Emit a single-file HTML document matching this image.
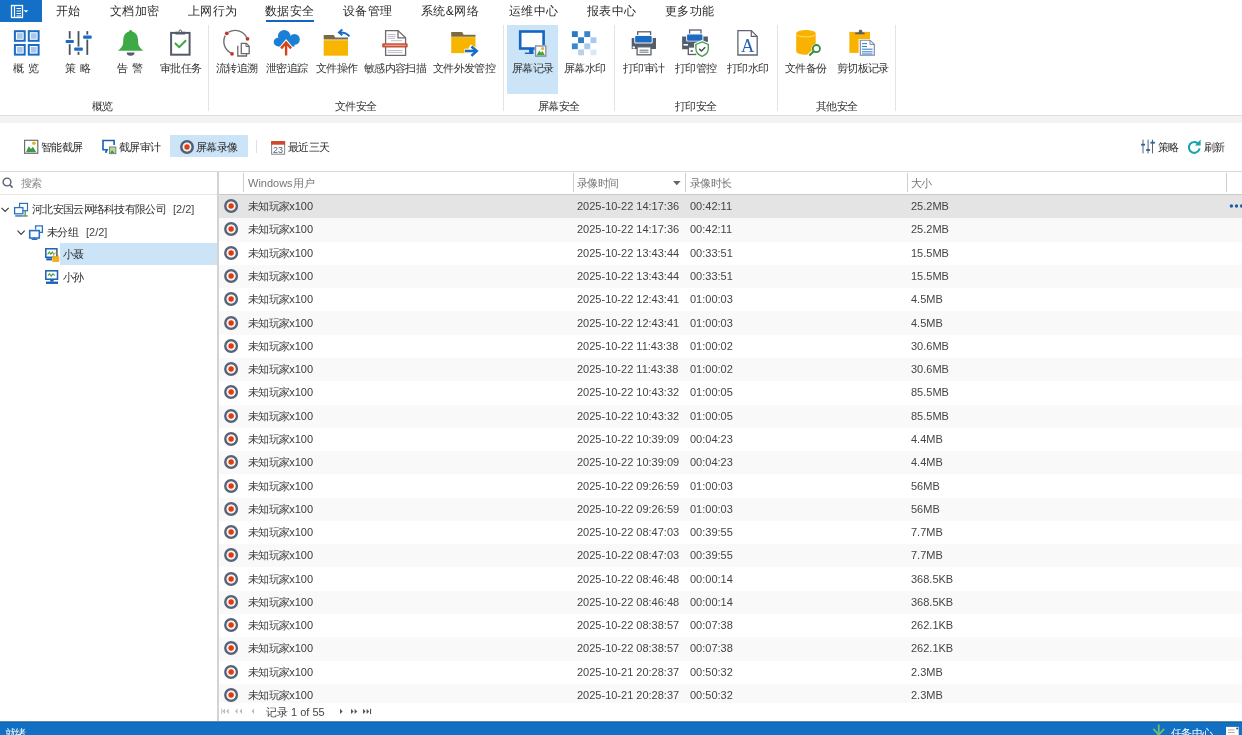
<!DOCTYPE html><html><head><meta charset="utf-8"><style>
*{margin:0;padding:0;box-sizing:border-box}
html,body{width:1242px;height:735px;overflow:hidden;background:#fff}
body{position:relative;font-family:"Liberation Sans",sans-serif;color:#444}
.t{position:absolute;white-space:nowrap;line-height:14px}
#w{position:absolute;left:0;top:0;width:1242px;height:735px;will-change:transform}
.i{position:absolute;overflow:visible}
.r{position:absolute}
</style></head><body><div id="w"><div class="r" style="left:0px;top:0px;width:42px;height:22px;background:#1370c6;"></div>
<svg class="i" style="left:10px;top:4px;" width="22" height="15" viewBox="0 0 22 15"><rect x="1.5" y="1.5" width="11" height="12" fill="none" stroke="#fff" stroke-width="1.3"/><line x1="4.5" y1="2" x2="4.5" y2="13" stroke="#fff" stroke-width="1.2"/><line x1="6.5" y1="4.5" x2="11" y2="4.5" stroke="#fff" stroke-width="1"/><line x1="6.5" y1="7" x2="11" y2="7" stroke="#fff" stroke-width="1"/><line x1="6.5" y1="9.5" x2="11" y2="9.5" stroke="#fff" stroke-width="1"/><line x1="6.5" y1="12" x2="11" y2="12" stroke="#fff" stroke-width="1"/><path d="M13.6 6.2 L18.4 6.2 L16 8.4 Z" fill="#fff"/></svg>
<div class="t" style="left:56px;top:4px;font-size:12px;color:#2a2a2a;letter-spacing:0.4px;">开始</div>
<div class="t" style="left:110px;top:4px;font-size:12px;color:#2a2a2a;letter-spacing:0.4px;">文档加密</div>
<div class="t" style="left:188px;top:4px;font-size:12px;color:#2a2a2a;letter-spacing:0.4px;">上网行为</div>
<div class="t" style="left:265px;top:4px;font-size:12px;color:#2a2a2a;letter-spacing:0.4px;">数据安全</div>
<div class="t" style="left:343px;top:4px;font-size:12px;color:#2a2a2a;letter-spacing:0.4px;">设备管理</div>
<div class="t" style="left:421px;top:4px;font-size:12px;color:#2a2a2a;letter-spacing:0.4px;">系统&amp;网络</div>
<div class="t" style="left:509px;top:4px;font-size:12px;color:#2a2a2a;letter-spacing:0.4px;">运维中心</div>
<div class="t" style="left:587px;top:4px;font-size:12px;color:#2a2a2a;letter-spacing:0.4px;">报表中心</div>
<div class="t" style="left:665px;top:4px;font-size:12px;color:#2a2a2a;letter-spacing:0.4px;">更多功能</div>
<div class="r" style="left:266px;top:20px;width:48px;height:2px;background:#1565c0;"></div>
<div class="r" style="left:170px;top:135px;width:78px;height:22px;background:#cce4f7;"></div>
<div class="r" style="left:60px;top:243px;width:157px;height:22px;background:#cce4f7;"></div>
<div class="r" style="left:507px;top:25px;width:51px;height:69px;background:#cce4f7;"></div>
<div class="r" style="left:208px;top:25px;width:1px;height:86px;background:#e4e4e4;"></div>
<div class="r" style="left:503px;top:25px;width:1px;height:86px;background:#e4e4e4;"></div>
<div class="r" style="left:614px;top:25px;width:1px;height:86px;background:#e4e4e4;"></div>
<div class="r" style="left:777px;top:25px;width:1px;height:86px;background:#e4e4e4;"></div>
<div class="r" style="left:895px;top:25px;width:1px;height:86px;background:#e4e4e4;"></div>
<div class="r" style="left:0px;top:115px;width:1242px;height:1px;background:#dedede;"></div>
<div class="r" style="left:0px;top:116px;width:1242px;height:7px;background:#f3f3f3;"></div>
<svg class="i" style="left:13px;top:29px;" width="28" height="28" viewBox="0 0 28 28"><rect x="1.9" y="2.2" width="9.8" height="9.6" fill="#fff" stroke="#1a6cc4" stroke-width="2"/><rect x="3.9" y="4.2" width="5.8" height="5.6" fill="#a6c6ee"/><rect x="15.8" y="2.2" width="9.8" height="9.6" fill="#fff" stroke="#1a6cc4" stroke-width="2"/><rect x="17.8" y="4.2" width="5.8" height="5.6" fill="#a6c6ee"/><rect x="1.9" y="16" width="9.8" height="9.6" fill="#fff" stroke="#1a6cc4" stroke-width="2"/><rect x="3.9" y="18" width="5.8" height="5.6" fill="#a6c6ee"/><rect x="15.8" y="16" width="9.8" height="9.6" fill="#fff" stroke="#1a6cc4" stroke-width="2"/><rect x="17.8" y="18" width="5.8" height="5.6" fill="#a6c6ee"/></svg>
<svg class="i" style="left:64px;top:30px;" width="30" height="27" viewBox="0 0 30 27"><line x1="5.7" y1="1.1" x2="5.7" y2="8.6" stroke="#4a505c" stroke-width="1.8"/><line x1="5.7" y1="14.2" x2="5.7" y2="24.9" stroke="#4a505c" stroke-width="1.8"/><line x1="14.5" y1="1.1" x2="14.5" y2="16.6" stroke="#4a505c" stroke-width="1.8"/><line x1="14.5" y1="21.8" x2="14.5" y2="24.9" stroke="#4a505c" stroke-width="1.8"/><line x1="23.3" y1="1.1" x2="23.3" y2="4.6" stroke="#4a505c" stroke-width="1.8"/><line x1="23.3" y1="9.6" x2="23.3" y2="24.9" stroke="#4a505c" stroke-width="1.8"/><rect x="1.6" y="9.9" width="8.3" height="3" rx="1" fill="#1a6cc4"/><rect x="10.1" y="17.5" width="8.8" height="3.3" rx="1" fill="#1a6cc4"/><rect x="19.1" y="5.5" width="8.6" height="3.2" rx="1" fill="#1a6cc4"/></svg>
<svg class="i" style="left:116px;top:29px;" width="30" height="28" viewBox="0 0 30 28"><circle cx="14.65" cy="2.6" r="1.7" fill="#3daa45"/><path d="M14.65 2.4 C10.2 2.4 7.6 5.4 7.3 10.5 L7 15 C6.7 17.6 4.3 19.6 2 21.7 L27.3 21.7 C25 19.6 22.6 17.6 22.3 15 L22 10.5 C21.7 5.4 19.1 2.4 14.65 2.4 Z" fill="#3daa45"/><path d="M10.7 23.6 A3.9 3.2 0 0 0 18.5 23.6 Z" fill="#555d6a"/></svg>
<svg class="i" style="left:168px;top:28px;" width="26" height="30" viewBox="0 0 26 30"><rect x="3.1" y="4.9" width="18.5" height="21.8" fill="#fff" stroke="#535b6b" stroke-width="2"/><path d="M7.4 6.6 L7.4 3.8 L10.6 3.8 C10.8 2.3 11.4 1.6 12.3 1.6 C13.2 1.6 13.8 2.3 14 3.8 L17.2 3.8 L17.2 6.6 Z" fill="#535b6b"/><circle cx="12.3" cy="3.4" r="0.8" fill="#fff"/><path d="M6.9 15.1 L11.2 19.1 L18.1 12.2" fill="none" stroke="#3da544" stroke-width="2"/></svg>
<svg class="i" style="left:220px;top:27px;" width="32" height="32" viewBox="0 0 32 32"><path d="M8.6 5.2 A12.9 12.9 0 0 1 26.6 10.3" fill="none" stroke="#707070" stroke-width="1.4"/><path d="M5.3 8.5 A12.9 12.9 0 0 0 10.6 25.8" fill="none" stroke="#707070" stroke-width="1.4"/><circle cx="6.8" cy="6.3" r="1.9" fill="#c0352b"/><circle cx="27.5" cy="11.8" r="1.9" fill="#c0352b"/><circle cx="12" cy="26.8" r="1.9" fill="#c0352b"/><path d="M17.8 18.7 L17.8 29 L26.5 29 L26.5 26.8" fill="none" stroke="#6a6a6a" stroke-width="1.3"/><path d="M21.3 16.3 L26.3 16.3 L29.2 19.2 L29.2 26.6 L21.3 26.6 Z" fill="#fff" stroke="#6a6a6a" stroke-width="1.3"/><path d="M26 16.5 L26 19.5 L29 19.5" fill="none" stroke="#6a6a6a" stroke-width="1"/></svg>
<svg class="i" style="left:272px;top:28px;" width="30" height="30" viewBox="0 0 30 30"><g fill="#1b7fd6"><circle cx="12.2" cy="8.2" r="6.2"/><circle cx="22.4" cy="11.4" r="5.4"/><circle cx="6" cy="14" r="4.3"/><rect x="6" y="10" width="16.5" height="8.5"/><circle cx="10" cy="15" r="3.7"/><circle cx="19" cy="15" r="3.7"/></g><path d="M8.1 21.7 L14.1 14.6 L20.1 21.7" fill="none" stroke="#fff" stroke-width="4.5"/><path d="M9.1 20.4 L14.1 14.6 L19.1 20.4" fill="none" stroke="#d64318" stroke-width="2.4"/><line x1="14.1" y1="15.5" x2="14.1" y2="27.5" stroke="#d64318" stroke-width="2.4"/></svg>
<svg class="i" style="left:322px;top:27px;" width="30" height="30" viewBox="0 0 30 30"><path d="M1.7 8 L11.7 8 L13.2 10.6 L26 10.6 L26 12.6 L1.7 12.6 Z" fill="#7a6b3c"/><rect x="1.7" y="13.2" width="24.3" height="15.5" fill="#f8b500"/><path d="M27.4 9.3 Q24.5 5.4 18 5.4" fill="none" stroke="#1a6cc4" stroke-width="2"/><path d="M20.3 2.5 L17 5.4 L20.3 8.2" fill="none" stroke="#1a6cc4" stroke-width="2"/></svg>
<svg class="i" style="left:380px;top:27px;" width="32" height="32" viewBox="0 0 32 32"><path d="M5.6 3.6 L18 3.6 L25.6 10.8 L25.6 28.3 L5.6 28.3 Z" fill="#fff" stroke="#6b6b6b" stroke-width="1.3"/><path d="M18 3.6 L18 10.8 L25.6 10.8" fill="none" stroke="#6b6b6b" stroke-width="1.3"/><g stroke="#b8b4cc" stroke-width="0.9"><line x1="7.6" y1="7.5" x2="15.5" y2="7.5"/><line x1="7.6" y1="9.4" x2="15.5" y2="9.4"/><line x1="7.6" y1="11.3" x2="15" y2="11.3"/><line x1="11" y1="13.7" x2="22" y2="13.7"/><line x1="7.5" y1="23.5" x2="22.5" y2="23.5"/><line x1="7.5" y1="25.4" x2="22.5" y2="25.4"/></g><rect x="2.2" y="16.3" width="25.5" height="4.1" rx="1.2" fill="#c9533a"/><rect x="4.5" y="17.8" width="21" height="1.1" fill="#eba58f"/></svg>
<svg class="i" style="left:450px;top:29px;" width="30" height="30" viewBox="0 0 30 30"><path d="M1.2 2.9 L12.1 2.9 L13.6 5.8 L25.5 5.8 L25.5 7.7 L1.2 7.7 Z" fill="#7a6b3c"/><rect x="1.2" y="8.1" width="24.3" height="16" fill="#f8b500"/><path d="M14.5 22 L22 22 M19.6 17.4 L27.9 22 L19.6 26.9" fill="none" stroke="#fff" stroke-width="4.6"/><line x1="15" y1="22" x2="26" y2="22" stroke="#1a6cc4" stroke-width="2.6"/><path d="M21.4 17.4 L26.7 22 L21.4 26.9" fill="none" stroke="#1a6cc4" stroke-width="2.6"/></svg>
<svg class="i" style="left:516px;top:28px;" width="32" height="32" viewBox="0 0 32 32"><rect x="4.2" y="3.5" width="23.4" height="17" fill="#fff" stroke="#1565c5" stroke-width="2.6"/><rect x="13.1" y="21" width="4.3" height="4.6" fill="#1565c5"/><rect x="8.9" y="24.6" width="8.5" height="1.4" fill="#1565c5"/><rect x="18.6" y="17" width="12.2" height="12.2" fill="#cce4f7"/><rect x="19.6" y="18" width="10.2" height="10.2" fill="#fff" stroke="#8a9098" stroke-width="1.3"/><path d="M20.5 27.5 L23.3 22.5 L25 24.8 L26.5 23 L29 27.5 Z" fill="#45a045"/><circle cx="26.7" cy="20.6" r="1.5" fill="#e8b020"/></svg>
<svg class="i" style="left:570px;top:29px;" width="28" height="28" viewBox="0 0 28 28"><rect x="1.9" y="2.2" width="5.9" height="5.8" fill="#2a78c6"/><rect x="14.3" y="2.2" width="5.9" height="5.8" fill="#3a84cc"/><rect x="8.1" y="8.3" width="5.9" height="5.8" fill="#2f7ec8"/><rect x="20.5" y="8.3" width="5.9" height="5.8" fill="#a9c9ea"/><rect x="1.9" y="14.399999999999999" width="5.9" height="5.8" fill="#3a86d0"/><rect x="14.3" y="14.399999999999999" width="5.9" height="5.8" fill="#a9c9ea"/><rect x="8.1" y="20.5" width="5.9" height="5.8" fill="#b9d1ea"/><rect x="20.5" y="20.5" width="5.9" height="5.8" fill="#dde8f4"/></svg>
<svg class="i" style="left:630px;top:29px;" width="30" height="28" viewBox="0 0 30 28"><rect x="7.7" y="2.8" width="12.9" height="6" fill="#fff" stroke="#5a606c" stroke-width="1.3"/><path d="M1.7 9 L26 9 L26 20 L1.7 20 Z" fill="#565d6a"/><circle cx="3.8" cy="18.4" r="1.2" fill="#fff"/><rect x="4.2" y="6.1" width="18.5" height="8.4" rx="1.5" fill="#eef6fc"/><rect x="5.2" y="7" width="16.5" height="6.6" rx="1" fill="#1a6cc4"/><rect x="7.1" y="17.8" width="13.9" height="8" fill="#fff" stroke="#5a606c" stroke-width="1.3"/><line x1="9.5" y1="21.2" x2="18.5" y2="21.2" stroke="#5a606c" stroke-width="0.9"/><line x1="9.5" y1="23.2" x2="18.5" y2="23.2" stroke="#5a606c" stroke-width="0.9"/></svg>
<svg class="i" style="left:680px;top:27px;" width="32" height="32" viewBox="0 0 32 32"><rect x="9.6" y="3" width="11.4" height="5" fill="#fff" stroke="#5a606c" stroke-width="1.3"/><path d="M2.1 9.4 L27.9 9.4 L27.9 15 L17 15 L17 22.3 L2.1 22.3 Z" fill="#565d6a"/><rect x="3.5" y="17" width="4.5" height="1.6" fill="#fff"/><rect x="6.1" y="6.6" width="17.3" height="8" rx="1.5" fill="#eef6fc"/><rect x="7.1" y="7.5" width="15.3" height="6.2" rx="1" fill="#1a6cc4"/><rect x="8.3" y="20" width="7.7" height="7.5" fill="#fff" stroke="#5a606c" stroke-width="1.3"/><rect x="10.5" y="23.2" width="2.4" height="1.6" fill="#5a606c"/><path d="M22.1 14.2 L29 17 L29 21.8 C29 26 26 28.6 22.1 30 C18.2 28.6 15.2 26 15.2 21.8 L15.2 17 Z" fill="#fff" stroke="#fff" stroke-width="2.2"/><path d="M22.1 14.9 L28.3 17.4 L28.3 21.8 C28.3 25.6 25.6 28 22.1 29.3 C18.6 28 15.9 25.6 15.9 21.8 L15.9 17.4 Z" fill="#fff" stroke="#4aa04e" stroke-width="1.4"/><path d="M19.2 21.9 L21.5 24 L25.2 20.2" fill="none" stroke="#4a4f5a" stroke-width="1.5"/></svg>
<svg class="i" style="left:735px;top:28px;" width="26" height="30" viewBox="0 0 26 30"><path d="M2.9 2.6 L16.3 2.6 L22.2 8.4 L22.2 27 L2.9 27 Z" fill="#fff" stroke="#5f6470" stroke-width="1.3"/><path d="M16.3 2.6 L16.3 8.4 L22.2 8.4" fill="none" stroke="#5f6470" stroke-width="1.2"/><text x="12.6" y="23.5" font-family="Liberation Serif" font-size="18.5" fill="#2a62b0" text-anchor="middle">A</text></svg>
<svg class="i" style="left:794px;top:28px;" width="30" height="30" viewBox="0 0 30 30"><path d="M2.2 5.6 L2.2 23.6 A9.75 3.2 0 0 0 21.7 23.6 L21.7 5.6 Z" fill="#f9b200"/><ellipse cx="11.95" cy="5.3" rx="9.75" ry="3.2" fill="#f9b200"/><path d="M2.4 6.5 A9.75 3.0 0 0 0 21.5 6.5" fill="none" stroke="#fde58a" stroke-width="0.9"/><circle cx="22.4" cy="20.6" r="4.9" fill="#fff"/><line x1="19.2" y1="23.6" x2="14.6" y2="27.8" stroke="#fff" stroke-width="3.6"/><circle cx="22.4" cy="20.6" r="3.6" fill="#fff" stroke="#3d8b3d" stroke-width="1.8"/><line x1="19.8" y1="23.2" x2="15.3" y2="27.4" stroke="#3d8b3d" stroke-width="2"/></svg>
<svg class="i" style="left:848px;top:28px;" width="30" height="30" viewBox="0 0 30 30"><rect x="1.4" y="3.9" width="20.6" height="21" fill="#f9b200"/><path d="M7 6.3 L7.4 4.6 L10.5 4.6 L11.4 1.7 L13.7 1.7 L14.6 4.6 L16.4 4.6 L16.8 6.3 Z" fill="#5a606c"/><path d="M11.6 12 L22.2 12 L26.8 16.2 L26.8 27.8 L11.6 27.8 Z" fill="#fff" stroke="#fff" stroke-width="2"/><path d="M12.3 12.2 L22 12.2 L26.3 16.4 L26.3 27.3 L12.3 27.3 Z" fill="#fff" stroke="#7a85a0" stroke-width="1.1"/><path d="M22 12.2 L22 16.4 L26.3 16.4" fill="none" stroke="#7a85a0" stroke-width="1"/><g stroke="#3a86d0" stroke-width="1.1"><line x1="14" y1="15.6" x2="19" y2="15.6"/><line x1="14" y1="18.5" x2="19" y2="18.5"/><line x1="14" y1="21.2" x2="24.6" y2="21.2"/><line x1="14" y1="23.8" x2="24.6" y2="23.8"/><line x1="14" y1="26" x2="24.6" y2="26"/></g></svg>
<svg class="i" style="left:23px;top:138px;" width="17" height="18" viewBox="0 0 17 18"><rect x="1.6" y="2.3" width="13.2" height="13" fill="#fff" stroke="#6f6f6f" stroke-width="1.2"/><path d="M3 14.2 L5.7 8.2 L8 11 L9.9 8.8 L13.3 14.2 Z" fill="#3e9a48"/><circle cx="10.9" cy="5.2" r="1.8" fill="#e2b51c"/></svg>
<svg class="i" style="left:101px;top:138px;" width="17" height="18" viewBox="0 0 17 18"><path d="M7 11.8 L2 11.8 L2 2.5 L13.1 2.5 L13.1 7" fill="none" stroke="#1a5fb8" stroke-width="1.6"/><path d="M5.4 11.8 L5.4 14 L4 14" fill="none" stroke="#1a5fb8" stroke-width="1.5"/><rect x="8.5" y="9" width="6.3" height="6.6" fill="#b5dba0" stroke="#7f8a80" stroke-width="1.1"/><path d="M9.3 15 L11 12 L13.5 15 Z" fill="#3e9a48"/></svg>
<svg class="i" style="left:179.5px;top:139.5px;" width="14" height="14" viewBox="0 0 14 14"><circle cx="7" cy="7" r="5.7" fill="none" stroke="#526075" stroke-width="2.5"/><circle cx="7" cy="7" r="4.2" fill="#fff2ec"/><circle cx="7" cy="7" r="2.7" fill="#dc3f12"/></svg>
<svg class="i" style="left:270px;top:140px;" width="16" height="16" viewBox="0 0 16 16"><rect x="1.6" y="1.6" width="13" height="12.6" fill="#fff" stroke="#8c9094" stroke-width="1.1"/><rect x="1.1" y="1.1" width="14" height="3.6" fill="#d2482a"/><text x="8.1" y="13.4" font-family="Liberation Sans" font-size="9" fill="#505a70" text-anchor="middle">23</text></svg>
<svg class="i" style="left:1140px;top:139px;" width="16" height="16" viewBox="0 0 16 16"><g stroke="#5b6270" stroke-width="1"><line x1="3" y1="0.6" x2="3" y2="14.4"/><line x1="8.1" y1="0.6" x2="8.1" y2="14.4"/><line x1="12.5" y1="0.6" x2="12.5" y2="14.4"/></g><rect x="1.1" y="4.8" width="3.9" height="1.8" fill="#2a62a8"/><rect x="6.1" y="10.1" width="4" height="1.8" fill="#2a62a8"/><rect x="10.4" y="2.8" width="4.5" height="1.8" fill="#2a62a8"/></svg>
<svg class="i" style="left:1186px;top:139px;" width="16" height="16" viewBox="0 0 16 16"><path d="M12.4 4.9 A5.4 5.4 0 1 0 13.6 9.4" fill="none" stroke="#16a3b0" stroke-width="2.1"/><path d="M9 6.6 L14.6 6.6 L14.6 0.6 Z" fill="#16a3b0"/></svg>
<svg class="i" style="left:1px;top:176px;" width="14" height="14" viewBox="0 0 14 14"><circle cx="6" cy="6" r="3.9" fill="none" stroke="#5a6070" stroke-width="1.4"/><line x1="8.8" y1="8.8" x2="11.6" y2="11.6" stroke="#5a6070" stroke-width="1.6"/></svg>
<svg class="i" style="left:0px;top:206px;" width="12" height="8" viewBox="0 0 12 8"><path d="M1.5 1.8 L5.1 5.5 L8.7 1.8" fill="none" stroke="#404040" stroke-width="1.2"/></svg>
<svg class="i" style="left:15.5px;top:229px;" width="12" height="8" viewBox="0 0 12 8"><path d="M1.5 1.6 L5.1 5.3 L8.7 1.6" fill="none" stroke="#404040" stroke-width="1.2"/></svg>
<svg class="i" style="left:13px;top:201px;" width="17" height="17" viewBox="0 0 17 17"><rect x="6.6" y="2.4" width="7.9" height="7.3" fill="#fff" stroke="#2a72c0" stroke-width="1.2"/><rect x="1.6" y="6.6" width="8.3" height="6.2" fill="#fff" stroke="#2a72c0" stroke-width="1.3"/><rect x="2.2" y="14.3" width="7.6" height="1.3" fill="#2a62b8"/><rect x="9.9" y="14.3" width="4.8" height="1.3" fill="#4a8a40"/><rect x="11.6" y="9.7" width="1.2" height="4.8" fill="#4a8a40"/></svg>
<svg class="i" style="left:28px;top:224px;" width="17" height="17" viewBox="0 0 17 17"><path d="M7.6 5.5 L7.6 1.9 L14.4 1.9 L14.4 8.4 L12 8.4" fill="none" stroke="#2a72c0" stroke-width="1.3"/><rect x="1.7" y="6.6" width="9.6" height="7.4" fill="#fff" stroke="#2a72c0" stroke-width="1.6"/><rect x="5.5" y="14" width="2" height="1.3" fill="#2a72c0"/><rect x="3.6" y="14.8" width="5.8" height="1.2" fill="#2a72c0"/></svg>
<svg class="i" style="left:44px;top:246px;" width="17" height="17" viewBox="0 0 17 17"><rect x="1.8" y="2.8" width="11.1" height="8.5" fill="#fff" stroke="#1a5fb4" stroke-width="1.5"/><path d="M3.6 8.5 L5.3 6 L6.8 8.3 L8.3 6 L9.8 8.5" fill="none" stroke="#4a9a40" stroke-width="1.1"/><rect x="2.3" y="12.3" width="5.7" height="2.1" fill="#1a5fb4"/><rect x="8.3" y="10.3" width="6.9" height="5.7" rx="0.8" fill="#f2b21a"/><path d="M9.8 10.5 L9.8 8.9 A2 2 0 0 1 13.8 8.9 L13.8 10.5" fill="none" stroke="#c89010" stroke-width="0.9"/></svg>
<svg class="i" style="left:44px;top:268px;" width="17" height="17" viewBox="0 0 17 17"><rect x="1.8" y="2.8" width="11.7" height="8.4" fill="#fff" stroke="#1a5fb4" stroke-width="1.5"/><path d="M4 7.6 L5.6 5.6 L7.2 8.2 L8.8 5.9 L10.8 7.4" fill="none" stroke="#4a9a40" stroke-width="1.1"/><rect x="2" y="13.6" width="12" height="2.3" fill="#1a5fb4"/><rect x="6.2" y="11.8" width="3.4" height="1.8" fill="#1a5fb4"/></svg>
<div class="t" style="left:13px;top:60.5px;font-size:11px;color:#333;letter-spacing:-0.7px;">概&nbsp;&nbsp;览</div>
<div class="t" style="left:65px;top:60.5px;font-size:11px;color:#333;letter-spacing:-0.7px;">策&nbsp;&nbsp;略</div>
<div class="t" style="left:117px;top:60.5px;font-size:11px;color:#333;letter-spacing:-0.7px;">告&nbsp;&nbsp;警</div>
<div class="t" style="left:160px;top:60.5px;font-size:11px;color:#333;letter-spacing:-0.7px;">审批任务</div>
<div class="t" style="left:216px;top:60.5px;font-size:11px;color:#333;letter-spacing:-0.7px;">流转追溯</div>
<div class="t" style="left:266px;top:60.5px;font-size:11px;color:#333;letter-spacing:-0.7px;">泄密追踪</div>
<div class="t" style="left:316px;top:60.5px;font-size:11px;color:#333;letter-spacing:-0.7px;">文件操作</div>
<div class="t" style="left:364px;top:60.5px;font-size:11px;color:#333;letter-spacing:-0.7px;">敏感内容扫描</div>
<div class="t" style="left:433px;top:60.5px;font-size:11px;color:#333;letter-spacing:-0.7px;">文件外发管控</div>
<div class="t" style="left:512px;top:60.5px;font-size:11px;color:#333;letter-spacing:-0.7px;">屏幕记录</div>
<div class="t" style="left:564px;top:60.5px;font-size:11px;color:#333;letter-spacing:-0.7px;">屏幕水印</div>
<div class="t" style="left:623px;top:60.5px;font-size:11px;color:#333;letter-spacing:-0.7px;">打印审计</div>
<div class="t" style="left:675px;top:60.5px;font-size:11px;color:#333;letter-spacing:-0.7px;">打印管控</div>
<div class="t" style="left:727px;top:60.5px;font-size:11px;color:#333;letter-spacing:-0.7px;">打印水印</div>
<div class="t" style="left:785px;top:60.5px;font-size:11px;color:#333;letter-spacing:-0.7px;">文件备份</div>
<div class="t" style="left:837px;top:60.5px;font-size:11px;color:#333;letter-spacing:-0.7px;">剪切板记录</div>
<div class="t" style="left:92px;top:99px;font-size:11px;color:#333;letter-spacing:-0.7px;">概览</div>
<div class="t" style="left:335px;top:99px;font-size:11px;color:#333;letter-spacing:-0.7px;">文件安全</div>
<div class="t" style="left:538px;top:99px;font-size:11px;color:#333;letter-spacing:-0.7px;">屏幕安全</div>
<div class="t" style="left:675px;top:99px;font-size:11px;color:#333;letter-spacing:-0.7px;">打印安全</div>
<div class="t" style="left:816px;top:99px;font-size:11px;color:#333;letter-spacing:-0.7px;">其他安全</div>
<div class="r" style="left:256px;top:140px;width:1px;height:13px;background:#e0e0e0;"></div>
<div class="t" style="left:41px;top:139.5px;font-size:11px;color:#2a2a2a;letter-spacing:-0.7px;">智能截屏</div>
<div class="t" style="left:119px;top:139.5px;font-size:11px;color:#2a2a2a;letter-spacing:-0.7px;">截屏审计</div>
<div class="t" style="left:196px;top:139.5px;font-size:11px;color:#2a2a2a;letter-spacing:-0.7px;">屏幕录像</div>
<div class="t" style="left:288px;top:139.5px;font-size:11px;color:#2a2a2a;letter-spacing:-0.7px;">最近三天</div>
<div class="t" style="left:1158px;top:139.5px;font-size:11px;color:#2a2a2a;letter-spacing:-0.7px;">策略</div>
<div class="t" style="left:1204px;top:139.5px;font-size:11px;color:#2a2a2a;letter-spacing:-0.7px;">刷新</div>
<div class="r" style="left:0px;top:171px;width:1242px;height:1px;background:#d9d9d9;"></div>
<div class="r" style="left:217px;top:172px;width:2px;height:549px;background:#d3d3d3;"></div>
<div class="r" style="left:0px;top:194px;width:217px;height:1px;background:#e6e6e6;"></div>
<div class="t" style="left:21px;top:175.5px;font-size:11px;color:#8a8a8a;letter-spacing:-0.7px;">搜索</div>
<div class="t" style="left:32px;top:202.2px;font-size:11px;color:#2e2e2e;letter-spacing:-0.7px;">河北安国云网络科技有限公司</div>
<div class="t" style="left:47px;top:225.2px;font-size:11px;color:#2e2e2e;letter-spacing:-0.7px;">未分组</div>
<div class="t" style="left:63px;top:247.3px;font-size:11px;color:#2e2e2e;letter-spacing:-0.7px;">小聂</div>
<div class="t" style="left:63px;top:269.8px;font-size:11px;color:#2e2e2e;letter-spacing:-0.7px;">小孙</div>
<div class="t" style="left:173px;top:201.7px;font-size:11px;color:#444;">[2/2]</div>
<div class="t" style="left:86px;top:224.7px;font-size:11px;color:#444;">[2/2]</div>
<div class="r" style="left:219px;top:194px;width:1023px;height:1px;background:#c9c9c9;"></div>
<div class="r" style="left:243px;top:173px;width:1px;height:19px;background:#cfcfcf;"></div>
<div class="r" style="left:573px;top:173px;width:1px;height:19px;background:#cfcfcf;"></div>
<div class="r" style="left:685px;top:173px;width:1px;height:19px;background:#cfcfcf;"></div>
<div class="r" style="left:907px;top:173px;width:1px;height:19px;background:#cfcfcf;"></div>
<div class="r" style="left:1226px;top:173px;width:1px;height:19px;background:#cfcfcf;"></div>
<div class="t" style="left:248px;top:176px;font-size:11px;color:#777;">Windows用户</div>
<div class="t" style="left:577px;top:176px;font-size:11px;color:#777;letter-spacing:-0.7px;">录像时间</div>
<div class="t" style="left:690px;top:176px;font-size:11px;color:#777;letter-spacing:-0.7px;">录像时长</div>
<div class="t" style="left:911px;top:176px;font-size:11px;color:#777;letter-spacing:-0.7px;">大小</div>
<svg class="i" style="left:672px;top:180px;" width="10" height="6" viewBox="0 0 10 6"><path d="M1 1 L8.6 1 L4.8 5.3 Z" fill="#666"/></svg>
<div class="r" style="left:219px;top:195.0px;width:1023px;height:23.28px;background:#e4e4e4;"></div>
<svg class="i" style="left:223px;top:198.14px;" width="16" height="16" viewBox="0 0 16 16"><circle cx="8.1" cy="8" r="5.8" fill="none" stroke="#56647a" stroke-width="2.45"/><circle cx="8.1" cy="8" r="4.25" fill="#fff1ea"/><circle cx="8.1" cy="8" r="2.7" fill="#dc3c12"/></svg>
<div class="t" style="left:248px;top:199.14px;font-size:11px;color:#3a3a3a"><span style="letter-spacing:-0.7px">未知玩家</span>x100</div>
<div class="t" style="left:577px;top:199.14px;font-size:11px;color:#444;">2025-10-22 14:17:36</div>
<div class="t" style="left:690px;top:199.14px;font-size:11px;color:#444;">00:42:11</div>
<div class="t" style="left:911px;top:199.14px;font-size:11px;color:#444;">25.2MB</div>
<div class="r" style="left:219px;top:218.28px;width:1023px;height:23.28px;background:#f9f9f9;"></div>
<svg class="i" style="left:223px;top:221.42px;" width="16" height="16" viewBox="0 0 16 16"><circle cx="8.1" cy="8" r="5.8" fill="none" stroke="#56647a" stroke-width="2.45"/><circle cx="8.1" cy="8" r="4.25" fill="#fff1ea"/><circle cx="8.1" cy="8" r="2.7" fill="#dc3c12"/></svg>
<div class="t" style="left:248px;top:222.42px;font-size:11px;color:#3a3a3a"><span style="letter-spacing:-0.7px">未知玩家</span>x100</div>
<div class="t" style="left:577px;top:222.42px;font-size:11px;color:#444;">2025-10-22 14:17:36</div>
<div class="t" style="left:690px;top:222.42px;font-size:11px;color:#444;">00:42:11</div>
<div class="t" style="left:911px;top:222.42px;font-size:11px;color:#444;">25.2MB</div>
<div class="r" style="left:219px;top:241.56px;width:1023px;height:23.28px;background:#ffffff;"></div>
<svg class="i" style="left:223px;top:244.7px;" width="16" height="16" viewBox="0 0 16 16"><circle cx="8.1" cy="8" r="5.8" fill="none" stroke="#56647a" stroke-width="2.45"/><circle cx="8.1" cy="8" r="4.25" fill="#fff1ea"/><circle cx="8.1" cy="8" r="2.7" fill="#dc3c12"/></svg>
<div class="t" style="left:248px;top:245.7px;font-size:11px;color:#3a3a3a"><span style="letter-spacing:-0.7px">未知玩家</span>x100</div>
<div class="t" style="left:577px;top:245.7px;font-size:11px;color:#444;">2025-10-22 13:43:44</div>
<div class="t" style="left:690px;top:245.7px;font-size:11px;color:#444;">00:33:51</div>
<div class="t" style="left:911px;top:245.7px;font-size:11px;color:#444;">15.5MB</div>
<div class="r" style="left:219px;top:264.84000000000003px;width:1023px;height:23.28px;background:#f9f9f9;"></div>
<svg class="i" style="left:223px;top:267.98px;" width="16" height="16" viewBox="0 0 16 16"><circle cx="8.1" cy="8" r="5.8" fill="none" stroke="#56647a" stroke-width="2.45"/><circle cx="8.1" cy="8" r="4.25" fill="#fff1ea"/><circle cx="8.1" cy="8" r="2.7" fill="#dc3c12"/></svg>
<div class="t" style="left:248px;top:268.98px;font-size:11px;color:#3a3a3a"><span style="letter-spacing:-0.7px">未知玩家</span>x100</div>
<div class="t" style="left:577px;top:268.98px;font-size:11px;color:#444;">2025-10-22 13:43:44</div>
<div class="t" style="left:690px;top:268.98px;font-size:11px;color:#444;">00:33:51</div>
<div class="t" style="left:911px;top:268.98px;font-size:11px;color:#444;">15.5MB</div>
<div class="r" style="left:219px;top:288.12px;width:1023px;height:23.28px;background:#ffffff;"></div>
<svg class="i" style="left:223px;top:291.26px;" width="16" height="16" viewBox="0 0 16 16"><circle cx="8.1" cy="8" r="5.8" fill="none" stroke="#56647a" stroke-width="2.45"/><circle cx="8.1" cy="8" r="4.25" fill="#fff1ea"/><circle cx="8.1" cy="8" r="2.7" fill="#dc3c12"/></svg>
<div class="t" style="left:248px;top:292.26px;font-size:11px;color:#3a3a3a"><span style="letter-spacing:-0.7px">未知玩家</span>x100</div>
<div class="t" style="left:577px;top:292.26px;font-size:11px;color:#444;">2025-10-22 12:43:41</div>
<div class="t" style="left:690px;top:292.26px;font-size:11px;color:#444;">01:00:03</div>
<div class="t" style="left:911px;top:292.26px;font-size:11px;color:#444;">4.5MB</div>
<div class="r" style="left:219px;top:311.4px;width:1023px;height:23.28px;background:#f9f9f9;"></div>
<svg class="i" style="left:223px;top:314.54px;" width="16" height="16" viewBox="0 0 16 16"><circle cx="8.1" cy="8" r="5.8" fill="none" stroke="#56647a" stroke-width="2.45"/><circle cx="8.1" cy="8" r="4.25" fill="#fff1ea"/><circle cx="8.1" cy="8" r="2.7" fill="#dc3c12"/></svg>
<div class="t" style="left:248px;top:315.54px;font-size:11px;color:#3a3a3a"><span style="letter-spacing:-0.7px">未知玩家</span>x100</div>
<div class="t" style="left:577px;top:315.54px;font-size:11px;color:#444;">2025-10-22 12:43:41</div>
<div class="t" style="left:690px;top:315.54px;font-size:11px;color:#444;">01:00:03</div>
<div class="t" style="left:911px;top:315.54px;font-size:11px;color:#444;">4.5MB</div>
<div class="r" style="left:219px;top:334.68px;width:1023px;height:23.28px;background:#ffffff;"></div>
<svg class="i" style="left:223px;top:337.82px;" width="16" height="16" viewBox="0 0 16 16"><circle cx="8.1" cy="8" r="5.8" fill="none" stroke="#56647a" stroke-width="2.45"/><circle cx="8.1" cy="8" r="4.25" fill="#fff1ea"/><circle cx="8.1" cy="8" r="2.7" fill="#dc3c12"/></svg>
<div class="t" style="left:248px;top:338.82px;font-size:11px;color:#3a3a3a"><span style="letter-spacing:-0.7px">未知玩家</span>x100</div>
<div class="t" style="left:577px;top:338.82px;font-size:11px;color:#444;">2025-10-22 11:43:38</div>
<div class="t" style="left:690px;top:338.82px;font-size:11px;color:#444;">01:00:02</div>
<div class="t" style="left:911px;top:338.82px;font-size:11px;color:#444;">30.6MB</div>
<div class="r" style="left:219px;top:357.96000000000004px;width:1023px;height:23.28px;background:#f9f9f9;"></div>
<svg class="i" style="left:223px;top:361.1px;" width="16" height="16" viewBox="0 0 16 16"><circle cx="8.1" cy="8" r="5.8" fill="none" stroke="#56647a" stroke-width="2.45"/><circle cx="8.1" cy="8" r="4.25" fill="#fff1ea"/><circle cx="8.1" cy="8" r="2.7" fill="#dc3c12"/></svg>
<div class="t" style="left:248px;top:362.1px;font-size:11px;color:#3a3a3a"><span style="letter-spacing:-0.7px">未知玩家</span>x100</div>
<div class="t" style="left:577px;top:362.1px;font-size:11px;color:#444;">2025-10-22 11:43:38</div>
<div class="t" style="left:690px;top:362.1px;font-size:11px;color:#444;">01:00:02</div>
<div class="t" style="left:911px;top:362.1px;font-size:11px;color:#444;">30.6MB</div>
<div class="r" style="left:219px;top:381.24px;width:1023px;height:23.28px;background:#ffffff;"></div>
<svg class="i" style="left:223px;top:384.38px;" width="16" height="16" viewBox="0 0 16 16"><circle cx="8.1" cy="8" r="5.8" fill="none" stroke="#56647a" stroke-width="2.45"/><circle cx="8.1" cy="8" r="4.25" fill="#fff1ea"/><circle cx="8.1" cy="8" r="2.7" fill="#dc3c12"/></svg>
<div class="t" style="left:248px;top:385.38px;font-size:11px;color:#3a3a3a"><span style="letter-spacing:-0.7px">未知玩家</span>x100</div>
<div class="t" style="left:577px;top:385.38px;font-size:11px;color:#444;">2025-10-22 10:43:32</div>
<div class="t" style="left:690px;top:385.38px;font-size:11px;color:#444;">01:00:05</div>
<div class="t" style="left:911px;top:385.38px;font-size:11px;color:#444;">85.5MB</div>
<div class="r" style="left:219px;top:404.52px;width:1023px;height:23.28px;background:#f9f9f9;"></div>
<svg class="i" style="left:223px;top:407.66px;" width="16" height="16" viewBox="0 0 16 16"><circle cx="8.1" cy="8" r="5.8" fill="none" stroke="#56647a" stroke-width="2.45"/><circle cx="8.1" cy="8" r="4.25" fill="#fff1ea"/><circle cx="8.1" cy="8" r="2.7" fill="#dc3c12"/></svg>
<div class="t" style="left:248px;top:408.66px;font-size:11px;color:#3a3a3a"><span style="letter-spacing:-0.7px">未知玩家</span>x100</div>
<div class="t" style="left:577px;top:408.66px;font-size:11px;color:#444;">2025-10-22 10:43:32</div>
<div class="t" style="left:690px;top:408.66px;font-size:11px;color:#444;">01:00:05</div>
<div class="t" style="left:911px;top:408.66px;font-size:11px;color:#444;">85.5MB</div>
<div class="r" style="left:219px;top:427.8px;width:1023px;height:23.28px;background:#ffffff;"></div>
<svg class="i" style="left:223px;top:430.94px;" width="16" height="16" viewBox="0 0 16 16"><circle cx="8.1" cy="8" r="5.8" fill="none" stroke="#56647a" stroke-width="2.45"/><circle cx="8.1" cy="8" r="4.25" fill="#fff1ea"/><circle cx="8.1" cy="8" r="2.7" fill="#dc3c12"/></svg>
<div class="t" style="left:248px;top:431.94px;font-size:11px;color:#3a3a3a"><span style="letter-spacing:-0.7px">未知玩家</span>x100</div>
<div class="t" style="left:577px;top:431.94px;font-size:11px;color:#444;">2025-10-22 10:39:09</div>
<div class="t" style="left:690px;top:431.94px;font-size:11px;color:#444;">00:04:23</div>
<div class="t" style="left:911px;top:431.94px;font-size:11px;color:#444;">4.4MB</div>
<div class="r" style="left:219px;top:451.08000000000004px;width:1023px;height:23.28px;background:#f9f9f9;"></div>
<svg class="i" style="left:223px;top:454.22px;" width="16" height="16" viewBox="0 0 16 16"><circle cx="8.1" cy="8" r="5.8" fill="none" stroke="#56647a" stroke-width="2.45"/><circle cx="8.1" cy="8" r="4.25" fill="#fff1ea"/><circle cx="8.1" cy="8" r="2.7" fill="#dc3c12"/></svg>
<div class="t" style="left:248px;top:455.22px;font-size:11px;color:#3a3a3a"><span style="letter-spacing:-0.7px">未知玩家</span>x100</div>
<div class="t" style="left:577px;top:455.22px;font-size:11px;color:#444;">2025-10-22 10:39:09</div>
<div class="t" style="left:690px;top:455.22px;font-size:11px;color:#444;">00:04:23</div>
<div class="t" style="left:911px;top:455.22px;font-size:11px;color:#444;">4.4MB</div>
<div class="r" style="left:219px;top:474.36px;width:1023px;height:23.28px;background:#ffffff;"></div>
<svg class="i" style="left:223px;top:477.5px;" width="16" height="16" viewBox="0 0 16 16"><circle cx="8.1" cy="8" r="5.8" fill="none" stroke="#56647a" stroke-width="2.45"/><circle cx="8.1" cy="8" r="4.25" fill="#fff1ea"/><circle cx="8.1" cy="8" r="2.7" fill="#dc3c12"/></svg>
<div class="t" style="left:248px;top:478.5px;font-size:11px;color:#3a3a3a"><span style="letter-spacing:-0.7px">未知玩家</span>x100</div>
<div class="t" style="left:577px;top:478.5px;font-size:11px;color:#444;">2025-10-22 09:26:59</div>
<div class="t" style="left:690px;top:478.5px;font-size:11px;color:#444;">01:00:03</div>
<div class="t" style="left:911px;top:478.5px;font-size:11px;color:#444;">56MB</div>
<div class="r" style="left:219px;top:497.64px;width:1023px;height:23.28px;background:#f9f9f9;"></div>
<svg class="i" style="left:223px;top:500.78px;" width="16" height="16" viewBox="0 0 16 16"><circle cx="8.1" cy="8" r="5.8" fill="none" stroke="#56647a" stroke-width="2.45"/><circle cx="8.1" cy="8" r="4.25" fill="#fff1ea"/><circle cx="8.1" cy="8" r="2.7" fill="#dc3c12"/></svg>
<div class="t" style="left:248px;top:501.78px;font-size:11px;color:#3a3a3a"><span style="letter-spacing:-0.7px">未知玩家</span>x100</div>
<div class="t" style="left:577px;top:501.78px;font-size:11px;color:#444;">2025-10-22 09:26:59</div>
<div class="t" style="left:690px;top:501.78px;font-size:11px;color:#444;">01:00:03</div>
<div class="t" style="left:911px;top:501.78px;font-size:11px;color:#444;">56MB</div>
<div class="r" style="left:219px;top:520.9200000000001px;width:1023px;height:23.28px;background:#ffffff;"></div>
<svg class="i" style="left:223px;top:524.06px;" width="16" height="16" viewBox="0 0 16 16"><circle cx="8.1" cy="8" r="5.8" fill="none" stroke="#56647a" stroke-width="2.45"/><circle cx="8.1" cy="8" r="4.25" fill="#fff1ea"/><circle cx="8.1" cy="8" r="2.7" fill="#dc3c12"/></svg>
<div class="t" style="left:248px;top:525.06px;font-size:11px;color:#3a3a3a"><span style="letter-spacing:-0.7px">未知玩家</span>x100</div>
<div class="t" style="left:577px;top:525.06px;font-size:11px;color:#444;">2025-10-22 08:47:03</div>
<div class="t" style="left:690px;top:525.06px;font-size:11px;color:#444;">00:39:55</div>
<div class="t" style="left:911px;top:525.06px;font-size:11px;color:#444;">7.7MB</div>
<div class="r" style="left:219px;top:544.2px;width:1023px;height:23.28px;background:#f9f9f9;"></div>
<svg class="i" style="left:223px;top:547.34px;" width="16" height="16" viewBox="0 0 16 16"><circle cx="8.1" cy="8" r="5.8" fill="none" stroke="#56647a" stroke-width="2.45"/><circle cx="8.1" cy="8" r="4.25" fill="#fff1ea"/><circle cx="8.1" cy="8" r="2.7" fill="#dc3c12"/></svg>
<div class="t" style="left:248px;top:548.34px;font-size:11px;color:#3a3a3a"><span style="letter-spacing:-0.7px">未知玩家</span>x100</div>
<div class="t" style="left:577px;top:548.34px;font-size:11px;color:#444;">2025-10-22 08:47:03</div>
<div class="t" style="left:690px;top:548.34px;font-size:11px;color:#444;">00:39:55</div>
<div class="t" style="left:911px;top:548.34px;font-size:11px;color:#444;">7.7MB</div>
<div class="r" style="left:219px;top:567.48px;width:1023px;height:23.28px;background:#ffffff;"></div>
<svg class="i" style="left:223px;top:570.62px;" width="16" height="16" viewBox="0 0 16 16"><circle cx="8.1" cy="8" r="5.8" fill="none" stroke="#56647a" stroke-width="2.45"/><circle cx="8.1" cy="8" r="4.25" fill="#fff1ea"/><circle cx="8.1" cy="8" r="2.7" fill="#dc3c12"/></svg>
<div class="t" style="left:248px;top:571.62px;font-size:11px;color:#3a3a3a"><span style="letter-spacing:-0.7px">未知玩家</span>x100</div>
<div class="t" style="left:577px;top:571.62px;font-size:11px;color:#444;">2025-10-22 08:46:48</div>
<div class="t" style="left:690px;top:571.62px;font-size:11px;color:#444;">00:00:14</div>
<div class="t" style="left:911px;top:571.62px;font-size:11px;color:#444;">368.5KB</div>
<div class="r" style="left:219px;top:590.76px;width:1023px;height:23.28px;background:#f9f9f9;"></div>
<svg class="i" style="left:223px;top:593.9px;" width="16" height="16" viewBox="0 0 16 16"><circle cx="8.1" cy="8" r="5.8" fill="none" stroke="#56647a" stroke-width="2.45"/><circle cx="8.1" cy="8" r="4.25" fill="#fff1ea"/><circle cx="8.1" cy="8" r="2.7" fill="#dc3c12"/></svg>
<div class="t" style="left:248px;top:594.9px;font-size:11px;color:#3a3a3a"><span style="letter-spacing:-0.7px">未知玩家</span>x100</div>
<div class="t" style="left:577px;top:594.9px;font-size:11px;color:#444;">2025-10-22 08:46:48</div>
<div class="t" style="left:690px;top:594.9px;font-size:11px;color:#444;">00:00:14</div>
<div class="t" style="left:911px;top:594.9px;font-size:11px;color:#444;">368.5KB</div>
<div class="r" style="left:219px;top:614.04px;width:1023px;height:23.28px;background:#ffffff;"></div>
<svg class="i" style="left:223px;top:617.18px;" width="16" height="16" viewBox="0 0 16 16"><circle cx="8.1" cy="8" r="5.8" fill="none" stroke="#56647a" stroke-width="2.45"/><circle cx="8.1" cy="8" r="4.25" fill="#fff1ea"/><circle cx="8.1" cy="8" r="2.7" fill="#dc3c12"/></svg>
<div class="t" style="left:248px;top:618.18px;font-size:11px;color:#3a3a3a"><span style="letter-spacing:-0.7px">未知玩家</span>x100</div>
<div class="t" style="left:577px;top:618.18px;font-size:11px;color:#444;">2025-10-22 08:38:57</div>
<div class="t" style="left:690px;top:618.18px;font-size:11px;color:#444;">00:07:38</div>
<div class="t" style="left:911px;top:618.18px;font-size:11px;color:#444;">262.1KB</div>
<div class="r" style="left:219px;top:637.32px;width:1023px;height:23.28px;background:#f9f9f9;"></div>
<svg class="i" style="left:223px;top:640.46px;" width="16" height="16" viewBox="0 0 16 16"><circle cx="8.1" cy="8" r="5.8" fill="none" stroke="#56647a" stroke-width="2.45"/><circle cx="8.1" cy="8" r="4.25" fill="#fff1ea"/><circle cx="8.1" cy="8" r="2.7" fill="#dc3c12"/></svg>
<div class="t" style="left:248px;top:641.46px;font-size:11px;color:#3a3a3a"><span style="letter-spacing:-0.7px">未知玩家</span>x100</div>
<div class="t" style="left:577px;top:641.46px;font-size:11px;color:#444;">2025-10-22 08:38:57</div>
<div class="t" style="left:690px;top:641.46px;font-size:11px;color:#444;">00:07:38</div>
<div class="t" style="left:911px;top:641.46px;font-size:11px;color:#444;">262.1KB</div>
<div class="r" style="left:219px;top:660.6px;width:1023px;height:23.28px;background:#ffffff;"></div>
<svg class="i" style="left:223px;top:663.74px;" width="16" height="16" viewBox="0 0 16 16"><circle cx="8.1" cy="8" r="5.8" fill="none" stroke="#56647a" stroke-width="2.45"/><circle cx="8.1" cy="8" r="4.25" fill="#fff1ea"/><circle cx="8.1" cy="8" r="2.7" fill="#dc3c12"/></svg>
<div class="t" style="left:248px;top:664.74px;font-size:11px;color:#3a3a3a"><span style="letter-spacing:-0.7px">未知玩家</span>x100</div>
<div class="t" style="left:577px;top:664.74px;font-size:11px;color:#444;">2025-10-21 20:28:37</div>
<div class="t" style="left:690px;top:664.74px;font-size:11px;color:#444;">00:50:32</div>
<div class="t" style="left:911px;top:664.74px;font-size:11px;color:#444;">2.3MB</div>
<div class="r" style="left:219px;top:683.88px;width:1023px;height:23.28px;background:#f9f9f9;"></div>
<svg class="i" style="left:223px;top:687.02px;" width="16" height="16" viewBox="0 0 16 16"><circle cx="8.1" cy="8" r="5.8" fill="none" stroke="#56647a" stroke-width="2.45"/><circle cx="8.1" cy="8" r="4.25" fill="#fff1ea"/><circle cx="8.1" cy="8" r="2.7" fill="#dc3c12"/></svg>
<div class="t" style="left:248px;top:688.02px;font-size:11px;color:#3a3a3a"><span style="letter-spacing:-0.7px">未知玩家</span>x100</div>
<div class="t" style="left:577px;top:688.02px;font-size:11px;color:#444;">2025-10-21 20:28:37</div>
<div class="t" style="left:690px;top:688.02px;font-size:11px;color:#444;">00:50:32</div>
<div class="t" style="left:911px;top:688.02px;font-size:11px;color:#444;">2.3MB</div>
<svg class="i" style="left:1228px;top:203px;" width="14" height="6" viewBox="0 0 14 6"><circle cx="3.4" cy="3" r="1.7" fill="#1d5fa6"/><circle cx="8.5" cy="3" r="1.7" fill="#1d5fa6"/><circle cx="13.6" cy="3" r="1.7" fill="#1d5fa6"/></svg>
<div class="r" style="left:219px;top:702.6px;width:1023px;height:19px;background:#ffffff;"></div>
<div class="t" style="left:266px;top:704.5px;font-size:11px;color:#444;">记录 1 of 55</div>
<svg class="i" style="left:219px;top:706px;" width="40" height="10" viewBox="0 0 40 10"><g fill="#b8b8b8"><rect x="2.2" y="2.6" width="1" height="5.3"/><path d="M6 2.6 L3.6 5.25 L6 7.9 Z"/><path d="M9.6 2.6 L7.2 5.25 L9.6 7.9 Z"/><path d="M18.5 2.6 L16.1 5.25 L18.5 7.9 Z"/><path d="M23 2.6 L20.6 5.25 L23 7.9 Z"/><path d="M35 2.6 L32.6 5.25 L35 7.9 Z"/></g></svg>
<svg class="i" style="left:337px;top:706px;" width="40" height="10" viewBox="0 0 40 10"><g fill="#555"><path d="M3 2.8 L5.6 5.45 L3 8.1 Z"/><path d="M14 2.8 L16.6 5.45 L14 8.1 Z"/><path d="M17.6 2.8 L20.2 5.45 L17.6 8.1 Z"/><path d="M26 2.8 L28.6 5.45 L26 8.1 Z"/><path d="M29.6 2.8 L32.2 5.45 L29.6 8.1 Z"/><rect x="33" y="2.8" width="1.1" height="5.3"/></g></svg>
<div class="r" style="left:0px;top:721px;width:1242px;height:14px;background:#1170c4;"></div>
<div class="r" style="left:0px;top:721px;width:1242px;height:1px;background:#5a8cb8;"></div>
<div class="r" style="left:0px;top:722px;width:1242px;height:1px;background:#1763a8;"></div>
<div class="t" style="left:5px;top:726px;font-size:11px;color:#fff;letter-spacing:-0.7px;">就绪</div>
<div class="t" style="left:1171px;top:726px;font-size:11px;color:#fff;letter-spacing:-0.7px;">任务中心</div>
<svg class="i" style="left:1152px;top:723px;" width="14" height="12" viewBox="0 0 14 12"><line x1="6.75" y1="1.5" x2="6.75" y2="12" stroke="#6cc070" stroke-width="1.8"/><path d="M1.3 5.8 L6.75 11.6 L12.2 5.8" fill="none" stroke="#6cc070" stroke-width="1.8"/></svg>
<svg class="i" style="left:1225px;top:726px;" width="15" height="9" viewBox="0 0 15 9"><rect x="1" y="0.9" width="12.7" height="9" fill="#fff"/><rect x="3" y="3.4" width="6.5" height="1" fill="#c8a888"/><rect x="3" y="6" width="6.5" height="1" fill="#c8a888"/><circle cx="12.2" cy="2.6" r="1" fill="#444"/></svg></div></body></html>
